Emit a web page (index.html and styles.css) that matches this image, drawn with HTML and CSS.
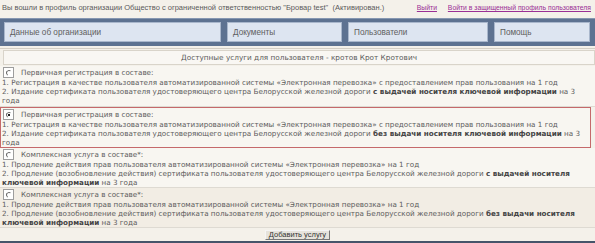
FILE: index.html
```html
<!DOCTYPE html>
<html lang="ru">
<head>
  <meta charset="UTF-8" />
  <title>Профиль организации</title>
  <link rel="stylesheet" href="styles.css">
</head>
<body>

<div class="topbar">
  <span class="who">Вы вошли в профиль организации Общество с ограниченной ответственностью "Бровар test" &nbsp;(Активирован.)</span>
  <span class="links">
    <a href="#">Выйти</a>
    <a href="#">Войти в защищенный профиль пользователя</a>
  </span>
</div>

<div class="menu">
  <div class="tab tab-org">Данные об организации</div>
  <div class="tab tab-docs">Документы</div>
  <div class="tab tab-users">Пользователи</div>
  <div class="tab tab-help">Помощь</div>
</div>

<div class="services">
  <div class="caption">Доступные услуги для пользователя - кротов Крот Кротович</div>

  <label class="option first">
    <div class="opt-head"><span class="radio"></span>Первичная регистрация в составе:</div>
    <div class="opt-body">
      1. Регистрация в качестве пользователя автоматизированной системы «Электронная перевозка» с предоставлением прав пользования на 1 год<br>
      2. Издание сертификата пользователя удостоверяющего центра Белорусской железной дороги <b>с выдачей носителя ключевой информации</b> на 3 года
    </div>
  </label>

  <label class="option selected">
    <div class="opt-head"><span class="radio checked"></span>Первичная регистрация в составе:</div>
    <div class="opt-body">
      1. Регистрация в качестве пользователя автоматизированной системы «Электронная перевозка» с предоставлением прав пользования на 1 год<br>
      2. Издание сертификата пользователя удостоверяющего центра Белорусской железной дороги <b>без выдачи носителя ключевой информации</b> на 3 года
    </div>
  </label>

  <label class="option">
    <div class="opt-head"><span class="radio"></span>Комплексная услуга в составе*:</div>
    <div class="opt-body">
      1. Продление действия прав пользователя автоматизированной системы «Электронная перевозка» на 1 год<br>
      2. Продление (возобновление действия) сертификата пользователя удостоверяющего центра Белорусской железной дороги <b>с выдачей носителя<br>ключевой информации</b> на 3 года
    </div>
  </label>

  <label class="option alt">
    <div class="opt-head"><span class="radio"></span>Комплексная услуга в составе*:</div>
    <div class="opt-body">
      1. Продление действия прав пользователя автоматизированной системы «Электронная перевозка» на 1 год<br>
      2. Продление (возобновление действия) сертификата пользователя удостоверяющего центра Белорусской железной дороги <b>без выдачи носителя<br>ключевой информации</b> на 3 года
    </div>
  </label>

  <div class="actions">
    <button type="button">Добавить услугу</button>
  </div>
</div>

<div class="bottom-line"></div>

</body>
</html>
```

FILE: styles.css
```css
html, body {
  margin: 0;
  padding: 0;
  background: #f4f1ea;
  color: #5a5a5a;
  font-family: "Liberation Sans", Arial, sans-serif;
  font-size: 7.5px;
}

body {
  display: flex;
  flex-direction: column;
  height: 243px;
  overflow: hidden;
}

.topbar {
  display: flex;
  justify-content: space-between;
  align-items: center;
  height: 15px;
  padding: 0 4px 0 2px;
  margin-bottom: 3px;
  flex-shrink: 0;
}

.links {
  font-size: 6.8px;
}

.links a {
  color: #9a2f95;
  margin-left: 9px;
}

.menu {
  display: flex;
  flex-shrink: 0;
  gap: 6px;
  height: 20px;
  padding: 3px 5px 4px 4px;
  background: #5d7291;
  border-top: 1px solid #8697b1;
  box-sizing: content-box;
}

.tab {
  display: flex;
  align-items: center;
  padding-left: 5px;
  background: #dde5f1;
  border: 1px solid #a9b7cc;
  box-sizing: border-box;
  color: #606060;
  font-size: 8.2px;
}

.tab-org { width: 217px; }
.tab-docs { width: 115px; }
.tab-users { width: 140px; }
.tab-help { width: 96px; }

.services {
  margin-top: 2px;
  border-top: 1px solid #d4cfc5;
  font-family: "DejaVu Sans", Verdana, sans-serif;
  font-size: 7.2px;
  color: #5c5c5c;
}

.caption {
  height: 13px;
  line-height: 13px;
  text-align: center;
  background: #f9f7f3;
  border: 1px solid #d9d4ca;
  margin: 1px 0 1px 3px;
  font-size: 7.3px;
}

.option {
  display: block;
  padding: 1px 2px 0 2px;
  background: #f8f6f1;
  border-bottom: 1px solid #dedad2;
  line-height: 9px;
}

.option.first {
  padding-bottom: 1px;
}

.option.alt {
  background: #f2ede4;
}

.option.selected {
  border: 1px solid #c5696b;
  margin-right: 4px;
  padding: 1px 1px 0 1px;
}

.opt-head {
  display: flex;
  align-items: center;
  height: 11px;
}

.opt-body b {
  color: #444;
}

.radio {
  width: 11px;
  height: 11px;
  margin: 0 7px 0 1px;
  background: #fff;
  border: 1px solid #9d9d9d;
  box-sizing: border-box;
  position: relative;
}

.radio::before {
  content: "";
  position: absolute;
  left: 2px;
  top: 2px;
  width: 6px;
  height: 6px;
  border-radius: 50%;
  border: 1px solid transparent;
  border-top-color: #6d6d6d;
  border-left-color: #6d6d6d;
  box-sizing: border-box;
  transform: rotate(-10deg);
}

.radio.checked::after {
  content: "";
  position: absolute;
  left: 4px;
  top: 4px;
  width: 2px;
  height: 2px;
  background: #222;
}

.actions {
  display: flex;
  justify-content: center;
  padding: 2px 0 0;
}

.actions button {
  font-family: "Liberation Sans", Arial, sans-serif;
  font-size: 7.5px;
  color: #333;
  background: #e6e3dc;
  border: 1px solid;
  border-color: #f5f5f5 #777 #777 #f5f5f5;
  padding: 0 3px;
  height: 10px;
  line-height: 8px;
}

.bottom-line {
  margin-top: auto;
  flex-shrink: 0;
  height: 2px;
  background: #46546a;
}
```
